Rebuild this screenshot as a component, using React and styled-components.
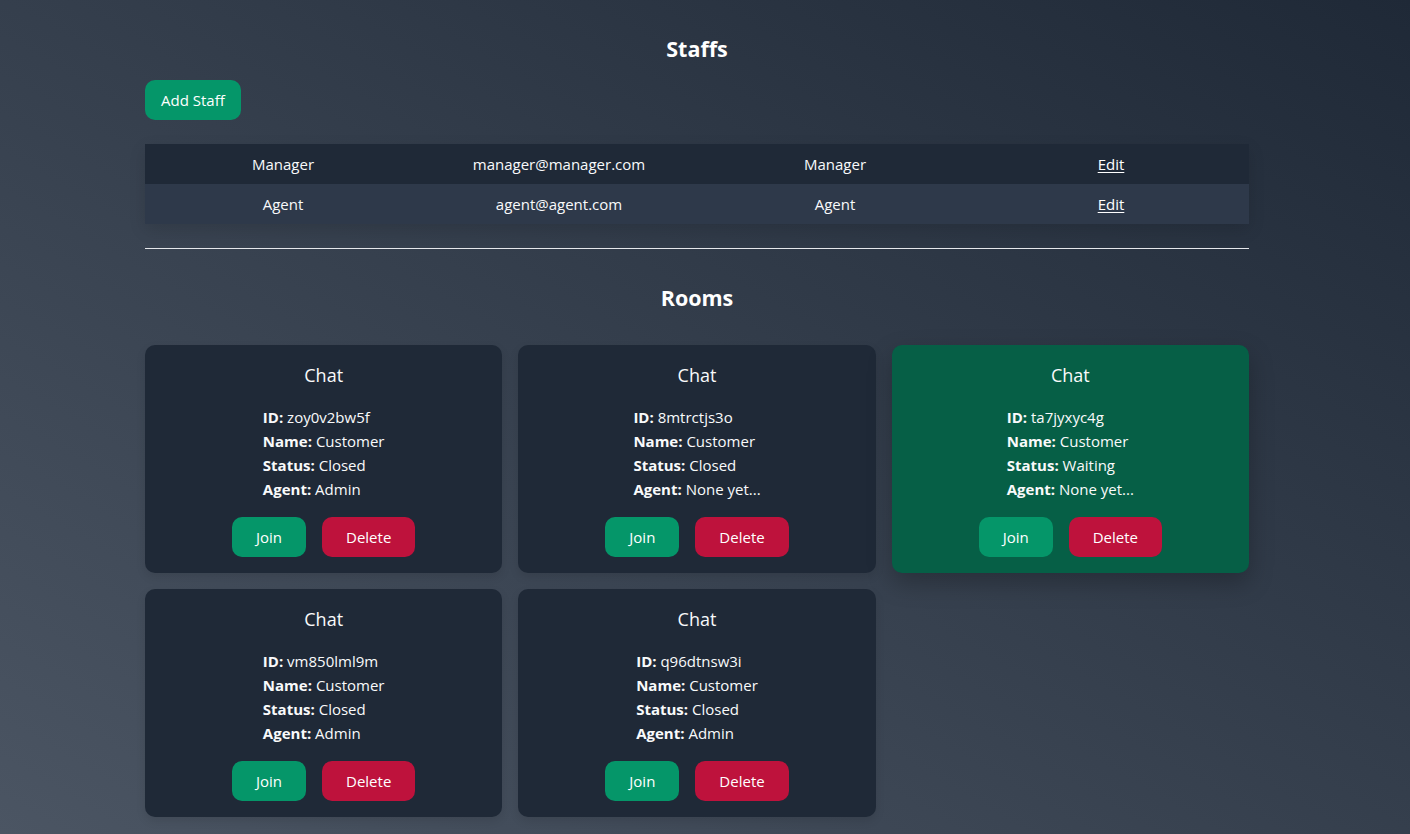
import React from 'react';
import styled, { createGlobalStyle } from 'styled-components';

const GlobalStyle = createGlobalStyle`
  html, body {
    margin: 0;
    padding: 0;
  }
  body {
    font-family: "Open Sans", "Noto Sans", sans-serif;
    color: #f9fafb;
    background: #1f2937;
  }
`;

const Page = styled.div`
  min-height: 100vh;
  box-sizing: border-box;
  padding: 33px 16px 32px 0;
  background: linear-gradient(to top right, #4b5563 0%, #1f2937 100%);
  background-attachment: fixed;
`;

const Container = styled.div`
  max-width: 1104px;
  margin: 0 auto;
`;

const Heading = styled.h2`
  margin: 0;
  text-align: center;
  font-size: 21.5px;
  line-height: 32px;
  font-weight: 700;
  color: #ffffff;
`;

const Toolbar = styled.div`
  display: flex;
  margin: 15px 0 24px;
`;

const Button = styled.button`
  height: 40px;
  padding: 0 ${(p) => p.$px || 16}px;
  border: none;
  border-radius: 10px;
  font-family: inherit;
  font-size: 15px;
  color: #ffffff;
  cursor: pointer;
  background-color: ${(p) => (p.$variant === 'danger' ? '#be123c' : '#059669')};
`;

const Table = styled.div`
  display: flex;
  flex-direction: column;
  box-shadow: 0 6px 16px rgba(0, 0, 0, 0.12);
`;

const Row = styled.div`
  display: grid;
  grid-template-columns: repeat(4, 1fr);
  align-items: center;
  height: 40px;
  background-color: ${(p) => (p.$alt ? '#2e394a' : '#1f2937')};
  font-size: 15px;
`;

const Cell = styled.div`
  text-align: center;
`;

const EditLink = styled.a`
  color: #ffffff;
  text-decoration: underline;
  text-underline-offset: 2px;
  cursor: pointer;
`;

const Divider = styled.hr`
  margin: 24px 0 33px;
  border: none;
  border-top: 1px solid #e5e7eb;
`;

const Grid = styled.div`
  display: grid;
  grid-template-columns: repeat(3, 1fr);
  gap: 16px;
  margin-top: 31px;
`;

const Card = styled.div`
  display: flex;
  flex-direction: column;
  align-items: center;
  gap: 16px;
  padding: 16px;
  border-radius: 10px;
  background-color: ${(p) => (p.$waiting ? '#065f46' : '#1f2937')};
  box-shadow: ${(p) =>
    p.$waiting ? '0 10px 25px rgba(0, 0, 0, 0.25)' : '0 4px 10px rgba(0, 0, 0, 0.1)'};
`;

const CardTitle = styled.h3`
  margin: 0;
  font-size: 18px;
  line-height: 28px;
  font-weight: 400;
`;

const Info = styled.div`
  text-align: left;
  font-size: 15px;
  line-height: 24px;

  b {
    font-weight: 700;
  }
`;

const Actions = styled.div`
  display: flex;
  gap: 16px;
`;

const staffs = [
  { name: 'Manager', email: 'manager@manager.com', role: 'Manager' },
  { name: 'Agent', email: 'agent@agent.com', role: 'Agent' },
];

const rooms = [
  { id: 'zoy0v2bw5f', name: 'Customer', status: 'Closed', agent: 'Admin' },
  { id: '8mtrctjs3o', name: 'Customer', status: 'Closed', agent: 'None yet...' },
  { id: 'ta7jyxyc4g', name: 'Customer', status: 'Waiting', agent: 'None yet...' },
  { id: 'vm850lml9m', name: 'Customer', status: 'Closed', agent: 'Admin' },
  { id: 'q96dtnsw3i', name: 'Customer', status: 'Closed', agent: 'Admin' },
];

const App = () => {
  return (
    <Page>
      <GlobalStyle />
      <Container>
        <Heading>Staffs</Heading>
        <Toolbar>
          <Button>Add Staff</Button>
        </Toolbar>
        <Table>
          {staffs.map((s, i) => (
            <Row key={s.email} $alt={i % 2 === 1}>
              <Cell>{s.name}</Cell>
              <Cell>{s.email}</Cell>
              <Cell>{s.role}</Cell>
              <Cell>
                <EditLink>Edit</EditLink>
              </Cell>
            </Row>
          ))}
        </Table>
        <Divider />
        <Heading>Rooms</Heading>
        <Grid>
          {rooms.map((r) => (
            <Card key={r.id} $waiting={r.status === 'Waiting'}>
              <CardTitle>Chat</CardTitle>
              <Info>
                <div><b>ID:</b> {r.id}</div>
                <div><b>Name:</b> {r.name}</div>
                <div><b>Status:</b> {r.status}</div>
                <div><b>Agent:</b> {r.agent}</div>
              </Info>
              <Actions>
                <Button $px={24}>Join</Button>
                <Button $px={24} $variant="danger">Delete</Button>
              </Actions>
            </Card>
          ))}
        </Grid>
      </Container>
    </Page>
  );
};

export default App;
